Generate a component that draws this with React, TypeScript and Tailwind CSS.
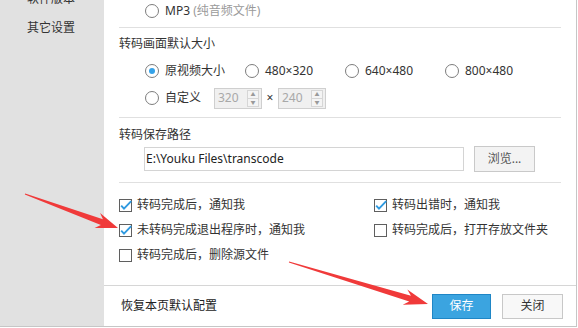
import React from "react";

const FONT = "font-['Noto_Sans','Noto_Sans_CJK_SC',sans-serif]";

function Radio({ checked }: { checked?: boolean }) {
  return (
    <span className="flex h-[14px] w-[14px] shrink-0 items-center justify-center rounded-full border border-[#7d7d7d] bg-white">
      {checked && <span className="h-[6px] w-[6px] rounded-full bg-[#35a2e8]" />}
    </span>
  );
}

function Check({ checked }: { checked?: boolean }) {
  return (
    <span className="relative h-[13px] w-[13px] shrink-0 border border-[#5f5f5f] bg-white">
      {checked && (
        <svg className="absolute left-[-1px] top-[-1px]" width="14" height="13" viewBox="0 0 14 13">
          <path d="M2.2 6.6 L5 9.6 L12.2 2.2" stroke="#2f9ae0" strokeWidth="1.9" fill="none" />
        </svg>
      )}
    </span>
  );
}

function Spin({ value }: { value: string }) {
  return (
    <div className="flex h-[21px] w-[48px] items-center border border-[#cfcfcf] bg-[#f0f0f0] pl-[3px] pr-[2px]">
      <span className="flex-1 text-[#a8a8a8]">{value}</span>
      <div className="flex h-[17px] w-[12px] flex-col border border-[#d6d6d6] bg-[#f4f4f4]">
        <span className="flex flex-1 items-center justify-center border-b border-[#d6d6d6] text-[5px] leading-none text-[#9a9a9a]">▲</span>
        <span className="flex flex-1 items-center justify-center text-[5px] leading-none text-[#9a9a9a]">▼</span>
      </div>
    </div>
  );
}

// tapered arrow polygon from tail (x1,y1) to tip (x2,y2)
function arrow(x1: number, y1: number, x2: number, y2: number, head: number, hw: number, sw: number) {
  const dx = x2 - x1;
  const dy = y2 - y1;
  const len = Math.hypot(dx, dy);
  const ux = dx / len;
  const uy = dy / len;
  const nx = -uy;
  const ny = ux;
  const bx = x2 - ux * head;
  const by = y2 - uy * head;
  const nbx = x2 - ux * head * 0.78;
  const nby = y2 - uy * head * 0.78;
  const pts = [
    [x1 + nx * 0.5, y1 + ny * 0.5],
    [nbx + nx * sw, nby + ny * sw],
    [bx + nx * hw, by + ny * hw],
    [x2, y2],
    [bx - nx * hw, by - ny * hw],
    [nbx - nx * sw, nby - ny * sw],
    [x1 - nx * 0.5, y1 - ny * 0.5],
  ];
  return pts.map((p) => p.join(",")).join(" ");
}

const sizes = ["原视频大小", "480×320", "640×480", "800×480"];

export default function App() {
  return (
    <div className={`relative h-[328px] w-[578px] overflow-hidden bg-white text-[12px] leading-[16px] text-[#333] ${FONT}`}>
      <div className="flex h-[327px] w-[577px] border-b border-r border-[#c6c6c6]">
        {/* sidebar */}
        <div className="w-[104px] shrink-0 bg-[#e1e1e1] pl-[27px]">
          <div className="mt-[-9px]">软件版本</div>
          <div className="mt-[13px]">其它设置</div>
        </div>

        {/* main */}
        <div className="flex flex-1 flex-col">
          <div className="h-[285px] px-[15px]">
            <div className="flex h-[22px] items-center gap-[6px] pl-[26px]">
              <Radio />
              <span>
                MP3 <span className="text-[#9a9a9a]">(纯音频文件)</span>
              </span>
            </div>
            <div className="mt-[5px] h-px bg-[#e0e0e0]" />

            <div className="mt-[8px]">转码画面默认大小</div>
            <div className="mt-[8px] flex h-[22px] items-center pl-[26px]">
              {sizes.map((s, i) => (
                <div key={s} className="flex w-[100px] items-center gap-[6px]">
                  <Radio checked={i === 0} />
                  <span>{s}</span>
                </div>
              ))}
            </div>
            <div className="mt-[5px] flex h-[22px] items-center pl-[26px]">
              <div className="flex w-[69px] items-center gap-[6px]">
                <Radio />
                <span>自定义</span>
              </div>
              <Spin value="320" />
              <span className="w-[16px] text-center">×</span>
              <Spin value="240" />
            </div>
            <div className="mt-[8px] h-px bg-[#e0e0e0]" />

            <div className="mt-[9px]">转码保存路径</div>
            <div className="mt-[3px] flex h-[26px] items-center pl-[25px]">
              <div className="flex h-[24px] w-[320px] items-center border border-[#d4d4d4] bg-white pl-[1px] text-[#222]">
                E:\Youku Files\transcode
              </div>
              <div className="ml-[10px] flex h-[26px] w-[61px] items-center justify-center border border-[#c9c9c9] bg-[#f3f3f3] text-[#555]">
                浏览...
              </div>
            </div>
            <div className="mt-[10px] h-px bg-[#e0e0e0]" />

            <div className="mt-[12px] grid grid-cols-[255px_1fr] gap-y-[5px]">
              <div className="flex h-[20px] items-center gap-[5px]">
                <Check checked />
                <span>转码完成后，通知我</span>
              </div>
              <div className="flex h-[20px] items-center gap-[5px]">
                <Check checked />
                <span>转码出错时，通知我</span>
              </div>
              <div className="flex h-[20px] items-center gap-[5px]">
                <Check checked />
                <span>未转码完成退出程序时，通知我</span>
              </div>
              <div className="flex h-[20px] items-center gap-[5px]">
                <Check />
                <span>转码完成后，打开存放文件夹</span>
              </div>
              <div className="flex h-[20px] items-center gap-[5px]">
                <Check />
                <span>转码完成后，删除源文件</span>
              </div>
            </div>
          </div>

          {/* footer */}
          <div className="flex flex-1 items-center border-t border-[#d6d6d6] pl-[17px] pr-[13px]">
            <span className="flex-1 text-[#222]">恢复本页默认配置</span>
            <div className="flex h-[25px] w-[59px] items-center justify-center border border-[#1f86c6] bg-[#3ba4e0] text-white">
              保存
            </div>
            <div className="ml-[11px] flex h-[25px] w-[61px] items-center justify-center border border-[#c8c8c8] bg-[#f8f8f8] text-[#333]">
              关闭
            </div>
          </div>
        </div>
      </div>

      {/* red arrows */}
      <svg className="pointer-events-none absolute left-0 top-0" width="578" height="328">
        <polygon points={arrow(25, 194, 118, 228, 22, 8, 3)} fill="#f03a3a" />
        <polygon points={arrow(289, 262, 428, 304, 24, 8, 3)} fill="#f03a3a" />
      </svg>
    </div>
  );
}
